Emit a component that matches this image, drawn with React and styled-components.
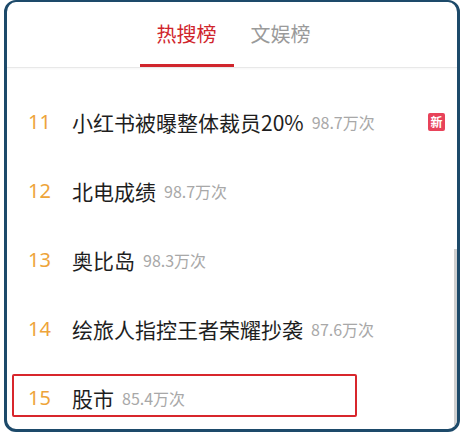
import React from "react";
import styled, { createGlobalStyle } from "styled-components";

const GlobalStyle = createGlobalStyle`
  html, body {
    margin: 0;
    padding: 0;
    background: #ffffff;
  }
  body {
    font-family: "Noto Sans CJK SC", "Noto Sans", sans-serif;
  }
`;

const Frame = styled.div`
  position: relative;
  box-sizing: border-box;
  width: 456px;
  height: 432px;
  margin-left: 4px;
  border: 3px solid #1d4a6a;
  border-top-width: 2px;
  border-radius: 12px;
  background: #ffffff;
  overflow: hidden;
`;

const TabBar = styled.div`
  display: flex;
  justify-content: center;
  height: 65px;
  padding-left: 3px;
  border-bottom: 1px solid #e8e8e8;
  box-shadow: 0 1px 2px rgba(0, 0, 0, 0.04);
`;

const Tab = styled.div`
  display: flex;
  align-items: center;
  box-sizing: border-box;
  height: 100%;
  padding: 0 17px;
  font-size: 20px;
  color: ${(p) => (p.$active ? "#d0252c" : "#9a9a9a")};
  border-bottom: 3px solid ${(p) => (p.$active ? "#d0252c" : "transparent")};
`;

const List = styled.div`
  padding-top: 19px;
`;

const Row = styled.div`
  position: relative;
  display: flex;
  align-items: center;
  height: 69px;
  padding: 0 12px 0 21px;

  ${(p) =>
    p.$marked &&
    `
    &::after {
      content: "";
      position: absolute;
      left: 5px;
      top: 11px;
      width: 345px;
      height: 43px;
      box-sizing: border-box;
      border: 2px solid #d8262c;
      border-radius: 2px;
    }
  `}
`;

const Rank = styled.span`
  width: 44px;
  flex-shrink: 0;
  font-family: "Noto Sans", sans-serif;
  font-size: 20px;
  color: #eea43a;
`;

const Title = styled.span`
  font-size: 21px;
  color: #1e1e1e;
  white-space: nowrap;
`;

const Count = styled.span`
  margin-left: 8px;
  font-size: 16px;
  color: #a8a8a8;
  white-space: nowrap;
`;

const Badge = styled.span`
  margin-left: auto;
  display: flex;
  align-items: center;
  justify-content: center;
  width: 17px;
  height: 18px;
  border-radius: 2px;
  background: #e8435a;
  color: #ffffff;
  font-size: 12px;
  font-weight: 700;
`;

const ScrollThumb = styled.div`
  position: absolute;
  right: 0;
  top: 247px;
  width: 3px;
  height: 190px;
  background: #cfcfcf;
`;

const items = [
  { rank: 11, title: "小红书被曝整体裁员20%", count: "98.7万次", isNew: true },
  { rank: 12, title: "北电成绩", count: "98.7万次" },
  { rank: 13, title: "奥比岛", count: "98.3万次" },
  { rank: 14, title: "绘旅人指控王者荣耀抄袭", count: "87.6万次" },
  { rank: 15, title: "股市", count: "85.4万次", marked: true },
];

const App = () => {
  return (
    <>
      <GlobalStyle />
      <Frame>
        <TabBar>
          <Tab $active>热搜榜</Tab>
          <Tab>文娱榜</Tab>
        </TabBar>
        <List>
          {items.map((item) => (
            <Row key={item.rank} $marked={item.marked}>
              <Rank>{item.rank}</Rank>
              <Title>{item.title}</Title>
              <Count>{item.count}</Count>
              {item.isNew && <Badge>新</Badge>}
            </Row>
          ))}
        </List>
        <ScrollThumb />
      </Frame>
    </>
  );
};

export default App;
